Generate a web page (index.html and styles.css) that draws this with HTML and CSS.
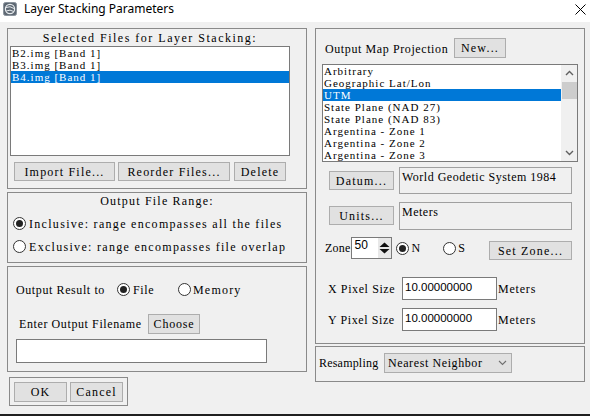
FILE: index.html
```html
<!DOCTYPE html>
<html>
<head>
<meta charset="utf-8">
<title>Layer Stacking Parameters</title>
<link rel="stylesheet" href="styles.css">
</head>
<body>
<div class="titlebar">
  <svg class="appicon" width="14" height="14" viewBox="0 0 14 14">
    <rect x="0.5" y="0.5" width="13" height="13" rx="2" fill="#5e6873" stroke="#8a939c"/>
    <circle cx="7" cy="7" r="4.6" fill="none" stroke="#e8ecef" stroke-width="1.2"/>
    <path d="M3 5.5 Q7 3.5 11 6.5" fill="none" stroke="#e8ecef" stroke-width="1"/>
    <path d="M3.2 9 Q7 7 10.8 9.5" fill="none" stroke="#e8ecef" stroke-width="1"/>
  </svg>
  <span class="wtitle">Layer Stacking Parameters</span>
  <svg class="close" width="11" height="11" viewBox="0 0 11 11">
    <path d="M0.5 0.5 L10.5 10.5 M10.5 0.5 L0.5 10.5" stroke="#000" stroke-width="1"/>
  </svg>
</div>

<div class="main">
  <div class="left">
    <div class="panel p1">
      <div class="ptitle">Selected Files for Layer Stacking:</div>
      <div class="listbox lb1">
        <div class="item">B2.img [Band 1]</div>
        <div class="item">B3.img [Band 1]</div>
        <div class="item sel">B4.img [Band 1]</div>
      </div>
      <div class="btnrow">
        <div class="btn b-import">Import File...</div>
        <div class="btn b-reorder">Reorder Files...</div>
        <div class="btn b-delete">Delete</div>
      </div>
    </div>

    <div class="panel p2">
      <div class="ptitle2">Output File Range:</div>
      <div class="rrow r-incl"><span class="radio on"></span><span class="rlabel">Inclusive: range encompasses all the files</span></div>
      <div class="rrow r-excl"><span class="radio"></span><span class="rlabel">Exclusive: range encompasses file overlap</span></div>
    </div>

    <div class="panel p3">
      <div class="rrow r-out">
        <span class="lbl w96 tight">Output Result to</span>
        <span class="radio on r-file"></span><span class="rlabel lbl w24 tight">File</span>
        <span class="radio r-mem"></span><span class="rlabel2">Memory</span>
      </div>
      <div class="r-fname">
        <span class="lbl w126 tight">Enter Output Filename</span>
        <div class="btn b-choose">Choose</div>
      </div>
      <div class="textin fname"></div>
    </div>

    <div class="okframe">
      <div class="btn b-ok">OK</div>
      <div class="btn b-cancel">Cancel</div>
    </div>
  </div>

  <div class="right">
    <div class="panel proj">
      <div class="prow">
        <span class="plabel lbl w126 tight">Output Map Projection</span>
        <div class="btn b-new">New...</div>
      </div>
      <div class="listbox lb2">
        <div class="items">
          <div class="item">Arbitrary</div>
          <div class="item">Geographic Lat/Lon</div>
          <div class="item sel">UTM</div>
          <div class="item">State Plane (NAD 27)</div>
          <div class="item">State Plane (NAD 83)</div>
          <div class="item">Argentina - Zone 1</div>
          <div class="item">Argentina - Zone 2</div>
          <div class="item">Argentina - Zone 3</div>
        </div>
        <div class="vscroll">
          <svg class="sarrow" width="9" height="6" viewBox="0 0 9 6"><path d="M1 5 L4.5 1.5 L8 5" fill="none" stroke="#606060" stroke-width="1.4"/></svg>
          <div class="thumb"></div>
          <div class="sspace"></div>
          <svg class="sarrow" width="9" height="6" viewBox="0 0 9 6"><path d="M1 1 L4.5 4.5 L8 1" fill="none" stroke="#606060" stroke-width="1.4"/></svg>
        </div>
      </div>
      <div class="drow datum">
        <div class="btn b-datum">Datum...</div>
        <div class="infobox ib-datum">World Geodetic System 1984</div>
      </div>
      <div class="drow units">
        <div class="btn b-units">Units...</div>
        <div class="infobox ib-units">Meters</div>
      </div>
      <div class="zrow">
        <span class="lbl w24 tighter">Zone</span>
        <div class="spinner">
          <span class="spinval">50</span>
          <div class="spinbtn">
            <svg width="11" height="12" viewBox="0 0 11 12"><path d="M5.5 0.5 L10.5 5 L0.5 5 Z M0.5 7 L10.5 7 L5.5 11.5 Z" fill="#111"/></svg>
          </div>
        </div>
        <span class="radio on z-n"></span><span class="rlabel2 lbl w6">N</span>
        <span class="radio z-s"></span><span class="rlabel2 lbl w6">S</span>
        <div class="btn b-setzone">Set Zone...</div>
      </div>
      <div class="pxrow xrow">
        <span class="lbl w72 tight">X Pixel Size</span>
        <div class="textin pxin"><span class="numval">10.00000000</span></div>
        <span class="unit">Meters</span>
      </div>
      <div class="pxrow yrow">
        <span class="lbl w72 tight">Y Pixel Size</span>
        <div class="textin pxin"><span class="numval">10.00000000</span></div>
        <span class="unit">Meters</span>
      </div>
    </div>

    <div class="panel resamp">
      <span class="lbl w60 tighter">Resampling</span>
      <div class="select">
        <span class="lbl w96 tight">Nearest Neighbor</span>
        <svg class="chev" width="9" height="6" viewBox="0 0 9 6"><path d="M1 1 L4.5 4.5 L8 1" fill="none" stroke="#707070" stroke-width="1.1"/></svg>
      </div>
    </div>
  </div>
</div>
<div class="bottomedge"></div>
</body>
</html>
```

FILE: styles.css
```css
html, body {
  margin: 0;
  padding: 0;
}

body {
  width: 590px;
  height: 416px;
  overflow: hidden;
  background: #f0f0f0;
  display: flex;
  flex-direction: column;
  font-family: "Liberation Serif", "DejaVu Serif", serif;
  font-size: 12px;
  letter-spacing: 1.2px;
  line-height: 12px;
  color: #000;
}

/* label cells sized like the original 6px-per-character UI font */
.lbl {
  display: inline-block;
  flex: none;
  white-space: nowrap;
}

.tight { letter-spacing: 0.6px; }
.tighter { letter-spacing: 0.2px; }

.w6 { min-width: 6px; }
.w24 { min-width: 24px; }
.w60 { min-width: 60px; }
.w72 { min-width: 72px; }
.w96 { min-width: 96px; }
.w126 { min-width: 126px; }

/* ---------- title bar ---------- */
.titlebar {
  height: 22px;
  flex: none;
  background: #fff;
  display: flex;
  align-items: flex-start;
  position: relative;
  font-family: "Noto Sans", "Liberation Sans", sans-serif;
  font-size: 12px;
  letter-spacing: 0;
}

.appicon {
  margin: 2px 0 0 3px;
  flex: none;
}

.wtitle {
  margin: 1px 0 0 7px;
  line-height: 16px;
  color: #000;
}

.close {
  position: absolute;
  right: 4px;
  top: 4px;
}

/* ---------- layout ---------- */
.main {
  flex: 1;
  display: flex;
  gap: 8px;
  padding: 6px 0 0 7px;
}

.left {
  width: 300px;
  display: flex;
  flex-direction: column;
  gap: 3px;
}

.right {
  width: 270px;
  display: flex;
  flex-direction: column;
  gap: 2px;
}

.panel {
  border: 1px solid #8a8a8a;
  box-sizing: border-box;
}

.bottomedge {
  height: 2px;
  flex: none;
  background: #1f1f1f;
}

/* ---------- common controls ---------- */
.btn {
  box-sizing: border-box;
  background: #e1e1e1;
  border: 1px solid #adadad;
  display: flex;
  align-items: center;
  justify-content: center;
  flex: none;
  white-space: nowrap;
}

.listbox {
  box-sizing: border-box;
  background: #fff;
  border: 1px solid #7a7a7a;
}

.item {
  height: 12px;
  line-height: 12px;
  font-size: 11px;
  letter-spacing: 1px;
  padding-left: 1px;
  white-space: nowrap;
}

.item.sel {
  background: #0078d7;
  color: #fff;
}

.radio {
  width: 13px;
  height: 13px;
  box-sizing: border-box;
  border: 1px solid #333;
  border-radius: 50%;
  background: #fff;
  display: inline-flex;
  align-items: center;
  justify-content: center;
  flex: none;
}

.radio.on::after {
  content: "";
  width: 7px;
  height: 7px;
  border-radius: 50%;
  background: #222;
}

.rrow {
  display: flex;
  align-items: center;
  height: 13px;
  white-space: nowrap;
}

.rlabel {
  margin-left: 3px;
}

.rlabel2 {
  margin-left: 2px;
}

.p2 .rlabel {
  letter-spacing: 1.3px;
}

.textin {
  box-sizing: border-box;
  background: #fff;
  border: 1px solid #7a7a7a;
}

/* ---------- panel 1 ---------- */
.p1 {
  height: 161px;
  padding-top: 3px;
}

.ptitle {
  width: 280px;
  margin-left: 2px;
  text-align: center;
  height: 12px;
  letter-spacing: 1.5px;
}

.lb1 {
  margin: 2px 0 0 2px;
  width: 280px;
  height: 110px;
}

.btnrow {
  display: flex;
  margin: 6px 0 0 6px;
}

.btnrow .btn {
  height: 19px;
}

.b-import { width: 101px; }
.b-reorder { width: 112px; margin-left: 3px; }
.b-delete { width: 52px; margin-left: 4px; }

/* ---------- panel 2 ---------- */
.p2 {
  height: 71px;
  padding-top: 2px;
}

.ptitle2 {
  text-align: center;
  height: 12px;
}

.p2 .rrow {
  margin-top: 10px;
  padding-left: 5px;
}

/* ---------- panel 3 ---------- */
.p3 {
  height: 106px;
}

.r-out {
  margin-top: 16px;
  padding-left: 8px;
}

.r-file { margin-left: 5px; }
.r-mem { margin-left: 21px; }

.r-fname {
  display: flex;
  align-items: center;
  margin-top: 18px;
  padding-left: 11px;
  height: 20px;
}

.b-choose {
  width: 52px;
  height: 20px;
  margin-left: 3px;
  letter-spacing: 0.8px;
}

.fname {
  margin: 5px 0 0 8px;
  width: 251px;
  height: 24px;
}

/* ---------- OK / Cancel ---------- */
.okframe {
  margin: 2px 0 0 2px;
  width: 119px;
  height: 29px;
  box-sizing: border-box;
  border: 1px solid #8a8a8a;
  display: flex;
  padding: 4px 0 0 4px;
}

.okframe .btn {
  width: 53px;
  height: 20px;
}

.b-cancel { margin-left: 3px; }

/* ---------- projection panel ---------- */
.proj {
  height: 316px;
  padding-top: 9px;
}

.prow {
  display: flex;
  align-items: center;
  padding-left: 9px;
  height: 20px;
}

.plabel {
  padding-top: 2px;
}

.b-new {
  width: 52px;
  height: 20px;
  margin-left: 3px;
}

.lb2 {
  margin: 6px 0 0 6px;
  width: 256px;
  height: 98px;
  display: flex;
}

.lb2 .items {
  flex: 1;
}

.vscroll {
  width: 16px;
  background: #f0f0f0;
  display: flex;
  flex-direction: column;
  align-items: center;
}

.sarrow {
  flex: none;
  margin: 5px 0;
}

.thumb {
  width: 15px;
  height: 17px;
  background: #cdcdcd;
  margin-top: 1px;
}

.sspace {
  flex: 1;
}

.drow {
  display: flex;
  align-items: flex-start;
  padding-left: 13px;
}

.datum { margin-top: 5px; }
.units { margin-top: 8px; }

.drow .btn {
  width: 65px;
  height: 19px;
  margin-top: 4px;
}

.infobox {
  box-sizing: border-box;
  margin-left: 5px;
  width: 173px;
  border: 1px solid #a0a0a0;
  background: #f0f0f0;
  padding: 3px 0 0 2px;
  white-space: nowrap;
  letter-spacing: 0.5px;
}

.ib-datum { height: 27px; }
.ib-units { height: 28px; }

.zrow {
  display: flex;
  align-items: center;
  margin-top: 7px;
  padding: 0 12px 0 9px;
  height: 22px;
  white-space: nowrap;
}

.spinner {
  box-sizing: border-box;
  margin-left: 1px;
  width: 41px;
  height: 22px;
  background: #fff;
  border: 1px solid #7a7a7a;
  display: flex;
}

.spinval {
  flex: 1;
  font-family: "Liberation Sans", Arial, sans-serif;
  font-size: 12px;
  letter-spacing: 0;
  line-height: 14px;
  padding: 0 0 0 2px;
}

.spinbtn {
  width: 13px;
  background: #e8e8e8;
  display: flex;
  align-items: center;
  justify-content: center;
}

.z-n { margin-left: 4px; }
.z-s { margin-left: 22px; }

.b-setzone {
  width: 83px;
  height: 19px;
  margin-left: auto;
  align-self: flex-start;
  margin-top: 4px;
}

.pxrow {
  display: flex;
  align-items: center;
  padding-left: 12px;
  height: 23px;
  white-space: nowrap;
}

.xrow { margin-top: 18px; }
.yrow { margin-top: 8px; }

.pxin {
  margin-left: 2px;
  width: 95px;
  height: 23px;
  padding: 2px 0 0 2px;
}

.numval {
  font-family: "Liberation Sans", Arial, sans-serif;
  font-size: 11.5px;
  letter-spacing: 0;
  line-height: 14px;
}

.unit {
  margin-left: 1px;
  letter-spacing: 0.8px;
}

/* ---------- resampling ---------- */
.resamp {
  height: 36px;
  padding: 6px 0 0 3px;
  display: flex;
  align-items: flex-start;
}

.resamp > .lbl {
  line-height: 20px;
}

.select {
  box-sizing: border-box;
  margin-left: 5px;
  width: 128px;
  height: 20px;
  background: #e1e1e1;
  border: 1px solid #adadad;
  display: flex;
  align-items: center;
  padding-left: 3px;
  white-space: nowrap;
}

.chev {
  margin-left: 14px;
}
```
